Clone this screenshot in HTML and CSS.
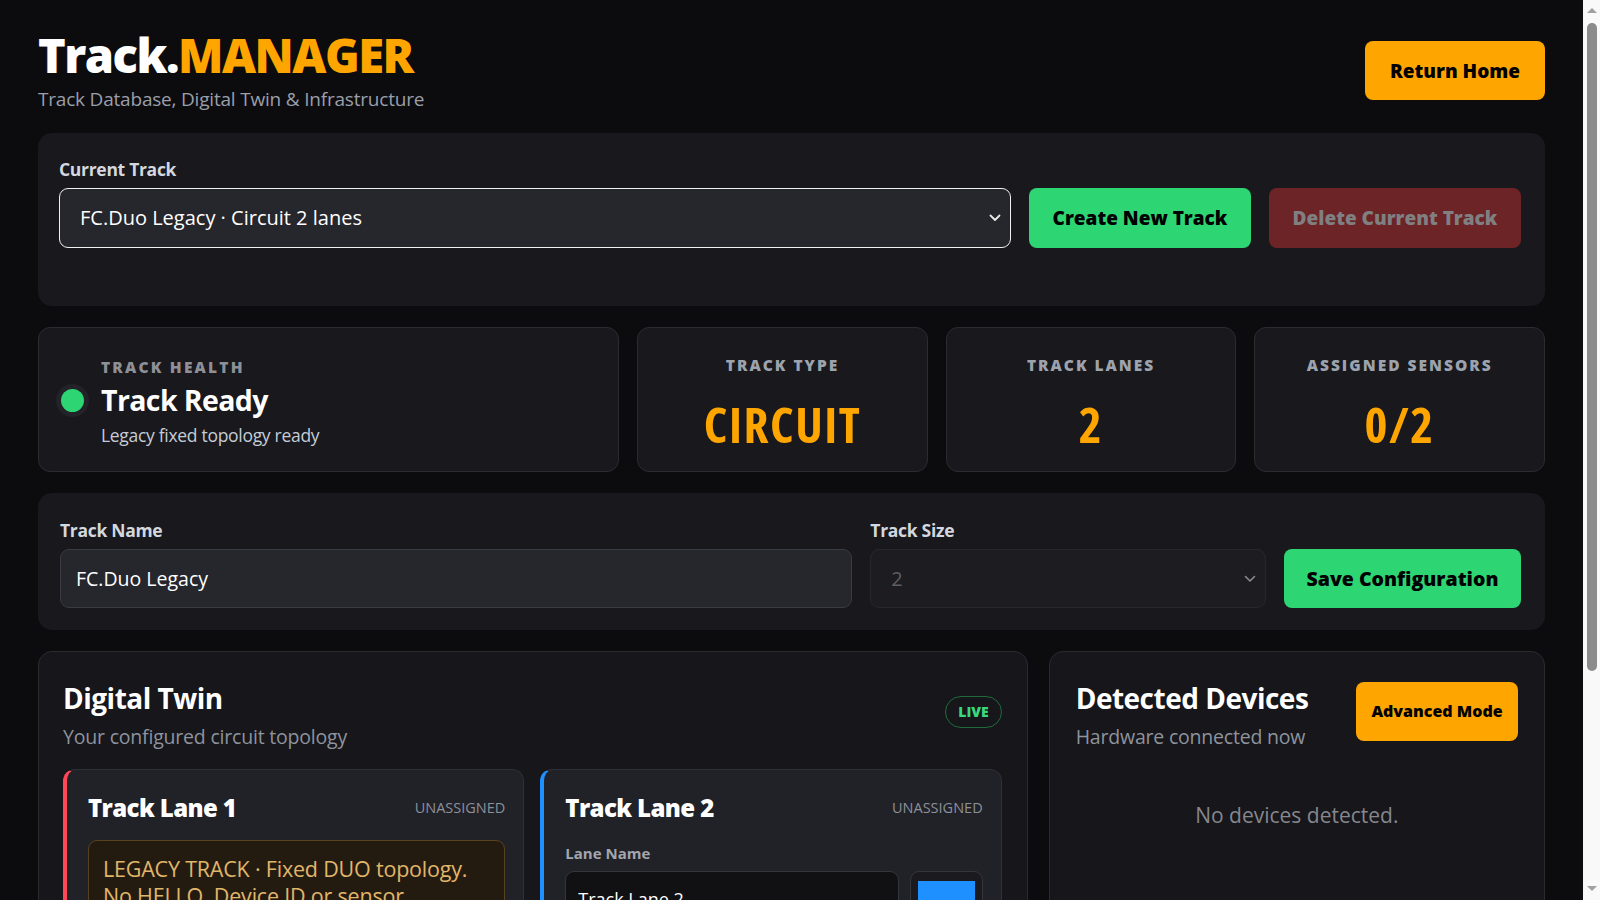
FILE: index.html
```html
<!DOCTYPE html>
<html lang="en">
<head>
<meta charset="utf-8">
<title>Track.MANAGER</title>
<link rel="stylesheet" href="styles.css">
</head>
<body>
<div class="scrollbar" aria-hidden="true">
  <span class="sb-arrow sb-up"></span>
  <span class="sb-thumb"></span>
  <span class="sb-arrow sb-down"></span>
</div>
<div class="page">
  <header class="topbar">
    <div class="brand">
      <h1 class="brand-title">Track.<span class="accent">MANAGER</span></h1>
      <p class="brand-sub">Track Database, Digital Twin &amp; Infrastructure</p>
    </div>
    <button class="btn btn-orange btn-home">Return Home</button>
  </header>

  <section class="panel panel-current">
    <label class="field-label">Current Track</label>
    <div class="current-row">
      <div class="select-wrap">
        <select class="select select-focus">
          <option>FC.Duo Legacy · Circuit 2 lanes</option>
        </select>
        <svg class="chev" width="12" height="8" viewBox="0 0 12 8"><path d="M1.5 1.5 L6 6 L10.5 1.5" fill="none" stroke="#e8e8e8" stroke-width="1.8" stroke-linecap="round" stroke-linejoin="round"/></svg>
      </div>
      <button class="btn btn-green btn-create">Create New Track</button>
      <button class="btn btn-danger-disabled btn-delete">Delete Current Track</button>
    </div>
  </section>

  <section class="stats">
    <div class="stat health">
      <span class="dot"></span>
      <div class="health-text">
        <div class="stat-label">TRACK HEALTH</div>
        <div class="health-title">Track Ready</div>
        <div class="health-sub">Legacy fixed topology ready</div>
      </div>
    </div>
    <div class="stat center">
      <div class="stat-label cond">TRACK TYPE</div>
      <div class="stat-value">CIRCUIT</div>
    </div>
    <div class="stat center">
      <div class="stat-label cond">TRACK LANES</div>
      <div class="stat-value">2</div>
    </div>
    <div class="stat center">
      <div class="stat-label cond">ASSIGNED SENSORS</div>
      <div class="stat-value">0/2</div>
    </div>
  </section>

  <section class="panel panel-config">
    <div class="cfg-col">
      <label class="field-label">Track Name</label>
      <input class="input" type="text" value="FC.Duo Legacy">
    </div>
    <div class="cfg-col">
      <label class="field-label">Track Size</label>
      <div class="select-wrap">
        <select class="select select-disabled" disabled>
          <option>2</option>
        </select>
        <svg class="chev" width="12" height="8" viewBox="0 0 12 8"><path d="M1.5 1.5 L6 6 L10.5 1.5" fill="none" stroke="#8a8a90" stroke-width="1.6" stroke-linecap="round" stroke-linejoin="round"/></svg>
      </div>
    </div>
    <button class="btn btn-green btn-save">Save Configuration</button>
  </section>

  <section class="bottom">
    <div class="panel2 twin">
      <div class="panel-head">
        <div>
          <h2 class="h2">Digital Twin</h2>
          <p class="sub">Your configured circuit topology</p>
        </div>
        <span class="live">LIVE</span>
      </div>
      <div class="lanes">
        <div class="lane lane-red">
          <div class="lane-head">
            <h3 class="lane-title">Track Lane 1</h3>
            <span class="lane-status">UNASSIGNED</span>
          </div>
          <div class="legacy">LEGACY TRACK · Fixed DUO topology. No HELLO, Device ID or sensor assignment required.</div>
        </div>
        <div class="lane lane-blue">
          <div class="lane-head">
            <h3 class="lane-title">Track Lane 2</h3>
            <span class="lane-status">UNASSIGNED</span>
          </div>
          <label class="lane-label">Lane Name</label>
          <div class="lane-row">
            <input class="lane-input" type="text" value="Track Lane 2">
            <div class="swatch"><span class="swatch-fill"></span></div>
          </div>
          <label class="lane-label">Sensor</label>
          <div class="lane-row">
            <input class="lane-input" type="text" value="Not assigned">
          </div>
        </div>
      </div>
    </div>
    <div class="panel2 devices">
      <div class="panel-head">
        <div>
          <h2 class="h2">Detected Devices</h2>
          <p class="sub">Hardware connected now</p>
        </div>
        <button class="btn btn-orange btn-adv">Advanced Mode</button>
      </div>
      <p class="empty">No devices detected.</p>
    </div>
  </section>
</div>
</body>
</html>
```
FILE: styles.css
```css
* { box-sizing: border-box; }
html, body { margin: 0; padding: 0; }
body {
  background: #0c0c0f;
  color: #fff;
  font-family: "Open Sans", "Noto Sans", sans-serif;
  padding-right: 17px;
}
.scrollbar {
  position: fixed;
  top: 0;
  right: 0;
  width: 17px;
  height: 100vh;
  background: #f9f9f9;
  z-index: 10;
}
.sb-thumb {
  position: absolute;
  left: 4px;
  right: 3px;
  top: 23px;
  height: 648px;
  background: #8b8b8b;
  border-radius: 6px;
}
.sb-arrow {
  position: absolute;
  left: 4px;
  width: 0;
  height: 0;
  border-left: 5px solid transparent;
  border-right: 5px solid transparent;
}
.sb-up {
  top: 8px;
  border-bottom: 5px solid #a0a0a0;
}
.sb-down {
  bottom: 9px;
  border-top: 5px solid #a0a0a0;
}
.page {
  padding: 30px 38px 40px 38px;
  display: flex;
  flex-direction: column;
  gap: 21px;
}
.topbar {
  display: flex;
  justify-content: space-between;
  align-items: center;
}
.brand-title {
  margin: 0;
  font-size: 47px;
  line-height: 1.1;
  font-weight: 800;
  letter-spacing: -1.5px;
  color: #fff;
}
.accent { color: #ffa500; }
.brand-sub {
  margin: 4px 0 0 0;
  font-size: 19px;
  color: #9a9fa9;
  letter-spacing: -0.2px;
}
.btn {
  border: none;
  border-radius: 8px;
  font-family: "Open Sans", "Noto Sans", sans-serif;
  font-weight: 800;
  cursor: pointer;
  color: #000;
}
.btn-orange { background: #ffa500; }
.btn-green { background: #2ed573; }
.btn-home {
  width: 180px;
  height: 59px;
  font-size: 19px;
  margin-top: 0;
}
.panel {
  background: #18181d;
  border-radius: 14px;
}
.panel-current {
  padding: 24px 24px 58px 21px;
}
.field-label {
  display: block;
  font-size: 17.5px;
  font-weight: 700;
  color: #d3d7de;
  margin-bottom: 7px;
  letter-spacing: -0.3px;
}
.current-row {
  display: flex;
  gap: 18px;
  align-items: center;
}
.select-wrap {
  position: relative;
  flex: 1;
}
.select {
  width: 100%;
  height: 60px;
  appearance: none;
  -webkit-appearance: none;
  border-radius: 9px;
  background: #26262d;
  color: #fff;
  font-family: "Open Sans", "Noto Sans", sans-serif;
  font-size: 20px;
  padding: 0 20px;
  outline: none;
}
.select-focus {
  border: 1.5px solid #f0f0f0;
}
.chev {
  position: absolute;
  right: 10px;
  top: 26px;
  pointer-events: none;
}
.btn-create {
  width: 222px;
  height: 60px;
  font-size: 19px;
}
.btn-danger-disabled {
  background: #6c2426;
  color: #808082;
}
.btn-delete {
  width: 252px;
  height: 60px;
  font-size: 19px;
}
.stats {
  display: grid;
  grid-template-columns: 2fr 1fr 1fr 1fr;
  gap: 18px;
}
.stat {
  background: #18181d;
  border: 1px solid #2b2b32;
  border-radius: 12px;
  height: 145px;
}
.health {
  display: flex;
  align-items: center;
  padding-left: 22px;
}
.dot {
  width: 23px;
  height: 23px;
  border-radius: 50%;
  background: #2ed573;
  box-shadow: 0 0 0 5px #222228;
  margin-right: 17px;
  flex: none;
  margin-top: 2px;
}
.stat-label {
  font-size: 15.5px;
  font-weight: 800;
  letter-spacing: 2.2px;
  color: #8e9097;
}
.health-text {
  margin-top: 4px;
}
.health-title {
  font-size: 28.5px;
  font-weight: 700;
  line-height: 1.2;
  margin-top: 5px;
  letter-spacing: -0.6px;
}
.health-sub {
  font-size: 17.5px;
  color: #c5ccd6;
  margin-top: 6px;
  letter-spacing: -0.3px;
}
.center {
  text-align: center;
  padding-top: 26px;
}
.stat-label.cond {
  font-stretch: 88%;
  letter-spacing: 2px;
  color: #9da3ad;
}
.stat-value {
  font-size: 49px;
  font-weight: 700;
  color: #ffa500;
  margin-top: 22px;
  line-height: 1.1;
  font-stretch: 87.5%;
  letter-spacing: 1.5px;
}
.panel-config {
  display: grid;
  grid-template-columns: 791fr 395fr 237px;
  gap: 18px;
  align-items: end;
  padding: 25px 24px 22px 22px;
}
.input {
  width: 100%;
  height: 59px;
  border-radius: 9px;
  border: 1px solid #3a3a42;
  background: #26262d;
  color: #fff;
  font-family: "Open Sans", "Noto Sans", sans-serif;
  font-size: 19.5px;
  padding: 0 15px;
  outline: none;
}
.select-disabled {
  border: 1px solid #2e2e35;
  background: #1f1f24;
  color: #7b7b80;
  height: 59px;
}
.btn-save {
  height: 59px;
  font-size: 19.5px;
}
.bottom {
  display: grid;
  grid-template-columns: 989fr 496fr;
  gap: 21px;
}
.panel2 {
  background: #16161b;
  border: 1px solid #2a2a31;
  border-radius: 14px;
}
.twin {
  padding: 28px 25px 30px 24px;
}
.panel-head {
  display: flex;
  justify-content: space-between;
  align-items: flex-start;
}
.h2 {
  margin: 0;
  font-size: 28px;
  font-weight: 700;
  line-height: 1.3;
  letter-spacing: -0.5px;
}
.sub {
  margin: 7px 0 0 0;
  font-size: 19.5px;
  color: #8e939d;
  letter-spacing: -0.2px;
}
.live {
  margin-top: 16px;
  border: 1.5px solid #1f6b3c;
  color: #3ad77c;
  border-radius: 20px;
  font-size: 14px;
  font-weight: 800;
  padding: 6px 12px;
  line-height: 1.3;
}
.lanes {
  margin-top: 19px;
  display: grid;
  grid-template-columns: 1fr 1fr;
  gap: 16px;
}
.lane {
  background: #212128;
  border: 1px solid #2f2f37;
  border-radius: 12px;
  padding: 21px 18px 22px 21px;
}
.lane-red { border-left: 4px solid #ff4757; }
.lane-blue { border-left: 4px solid #1e90ff; }
.lane-head {
  display: flex;
  justify-content: space-between;
  align-items: center;
}
.lane-title {
  margin: 0;
  font-size: 24px;
  font-weight: 800;
  letter-spacing: -0.6px;
}
.lane-status {
  font-size: 14.5px;
  color: #8c9099;
}
.legacy {
  margin-top: 16px;
  background: #241b10;
  border: 1px solid #5a4120;
  border-radius: 9px;
  color: #e0b66a;
  font-size: 21.5px;
  line-height: 1.27;
  padding: 14px 14px;
  letter-spacing: -0.2px;
}
.lane-label {
  display: block;
  margin-top: 19px;
  font-size: 15px;
  font-weight: 700;
  color: #a3a6ad;
  margin-bottom: 8px;
}
.lane-row {
  display: flex;
  gap: 11px;
}
.lane-input {
  flex: 1;
  height: 56px;
  background: #111114;
  border: 1px solid #35353c;
  border-radius: 9px;
  color: #fff;
  font-family: "Open Sans", "Noto Sans", sans-serif;
  font-size: 18px;
  padding: 0 12px;
}
.swatch {
  width: 73px;
  height: 56px;
  border: 1px solid #35353c;
  border-radius: 9px;
  background: #1a1a1f;
  padding: 9px 7px;
}
.swatch-fill {
  display: block;
  width: 100%;
  height: 100%;
  background: #1e90ff;
}
.devices {
  padding: 30px 26px 30px 26px;
}
.devices .h2 { margin-top: -2px; }
.btn-adv {
  width: 162px;
  height: 59px;
  font-size: 16px;
}
.empty {
  text-align: center;
  color: #85878d;
  font-size: 21px;
  margin: 51px 0 120px 0;
}
```
